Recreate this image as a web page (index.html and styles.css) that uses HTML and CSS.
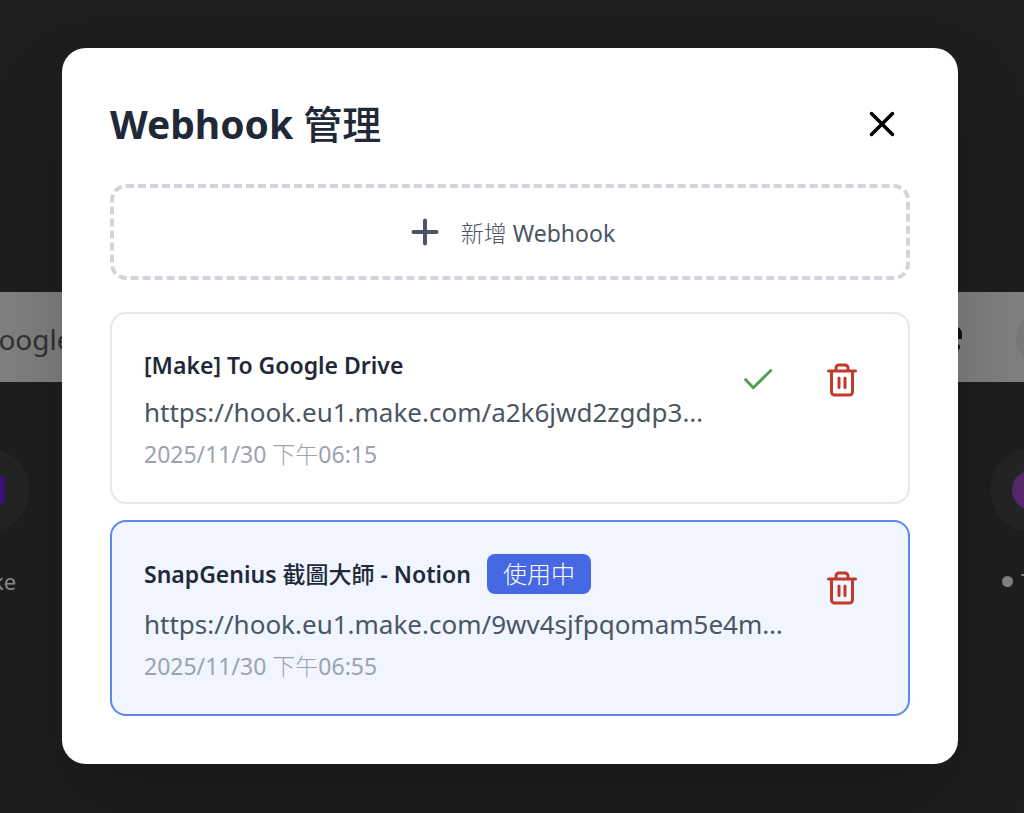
FILE: index.html
```
<!DOCTYPE html>
<html lang="zh-TW">
<head>
    <meta charset="UTF-8">
    <meta name="viewport" content="width=device-width, initial-scale=1.0">
    <title>Webhook 管理</title>
    <link rel="stylesheet" href="styles.css">
</head>
<body>
    <div class="page">
        <div class="search-bar">
            <span class="search-text">Google</span>
            <div class="search-tools">
                <svg width="32" height="32" viewBox="0 0 32 32" fill="none" stroke="#111" stroke-width="4">
                    <path d="M3 14v-3a6 6 0 0 1 6-6h15a6 6 0 0 1 6 6v5M3 20v3a6 6 0 0 0 6 6h7"/>
                    <circle cx="16" cy="17" r="4"/>
                    <circle cx="27" cy="24" r="3" fill="#111" stroke="none"/>
                </svg>
                <span class="search-action"></span>
            </div>
        </div>
        <div class="shortcuts">
            <div class="shortcut">
                <span class="shortcut-icon"><span class="make-logo"></span></span>
                <span>Make</span>
            </div>
            <div class="shortcut">
                <span class="shortcut-icon"><span class="round-logo"></span></span>
                <span class="shortcut-label"><i class="dot"></i>T</span>
            </div>
        </div>
    </div>

    <div class="overlay">
        <div class="modal" role="dialog" aria-labelledby="modalTitle">
            <div class="modal-header">
                <h1 id="modalTitle">Webhook <span class="cjk-medium">管理</span></h1>
                <button class="close-btn" type="button" aria-label="關閉">
                    <svg width="32" height="32" viewBox="0 0 32 32" fill="none" stroke="#000" stroke-width="3.500" stroke-linecap="round">
                        <path d="M5.500 5.500l21 21M26.500 5.500l-21 21"/>
                    </svg>
                </button>
            </div>

            <button class="add-btn" type="button">
                <svg width="40" height="40" viewBox="0 0 40 40" fill="none" stroke="currentColor" stroke-width="4" stroke-linecap="round">
                    <path d="M20 8.500v23M8.500 20h23"/>
                </svg>
                <span><span class="cjk">新增</span> Webhook</span>
            </button>

            <div class="webhook-list">
                <div class="webhook">
                    <div class="webhook-info">
                        <div class="webhook-name">[Make] To Google Drive</div>
                        <div class="webhook-url">https://hook.eu1.make.com/a2k6jwd2zgdp3…</div>
                        <div class="webhook-date">2025/11/30 <span class="cjk">下午</span>06:15</div>
                    </div>
                    <div class="webhook-actions">
                        <button class="icon-btn use" type="button" aria-label="使用">
                            <svg width="36" height="36" viewBox="0 0 36 36">
                                <path d="M5.700 17.700l7.600 8L30.700 8.500"/>
                            </svg>
                        </button>
                        <button class="icon-btn delete" type="button" aria-label="刪除">
                            <svg width="36" height="36" viewBox="0 0 36 36">
                                <path d="M4.500 9h27M7.500 9v21a3 3 0 0 0 3 3h15a3 3 0 0 0 3-3V9M12 9V6a3 3 0 0 1 3-3h6a3 3 0 0 1 3 3v3M15 16v9.500M21 16v9.500"/>
                            </svg>
                        </button>
                    </div>
                </div>

                <div class="webhook active">
                    <div class="webhook-info">
                        <div class="webhook-name"><span>SnapGenius <span class="cjk-medium">截圖大師</span> - Notion</span> <span class="badge">使用中</span></div>
                        <div class="webhook-url">https://hook.eu1.make.com/9wv4sjfpqomam5e4m…</div>
                        <div class="webhook-date">2025/11/30 <span class="cjk">下午</span>06:55</div>
                    </div>
                    <div class="webhook-actions">
                        <button class="icon-btn delete" type="button" aria-label="刪除">
                            <svg width="36" height="36" viewBox="0 0 36 36">
                                <path d="M4.500 9h27M7.500 9v21a3 3 0 0 0 3 3h15a3 3 0 0 0 3-3V9M12 9V6a3 3 0 0 1 3-3h6a3 3 0 0 1 3 3v3M15 16v9.500M21 16v9.500"/>
                            </svg>
                        </button>
                    </div>
                </div>
            </div>
        </div>
    </div>
</body>
</html>
```
FILE: styles.css
```
* {
    box-sizing: border-box;
}
body {
    margin: 0;
    min-height: 100vh;
    overflow: hidden;
    background-color: #1e1e1e;
    font-family: 'Segoe UI', 'Noto Sans', 'Noto Sans CJK TC', sans-serif;
    color: #1f2937;
}
h1 {
    margin: 0;
    font-size: 39px;
    line-height: 56px;
    font-weight: bold;
}
button {
    border: none;
    background: none;
    padding: 0;
    font-family: inherit;
    cursor: pointer;
}
svg {
    display: block;
    flex-shrink: 0;
}
.cjk {
    font-weight: 300;
}
.cjk-medium {
    font-weight: 500;
}

/* 背景頁面 */
.page {
    overflow: hidden;
    padding-top: 292px;
}
.search-bar {
    display: flex;
    align-items: center;
    justify-content: space-between;
    height: 90px;
    margin: 0 -64px 0 -22px;
    padding-top: 4px;
    background-color: #808080;
    color: #303134;
    font-size: 28px;
}
.search-tools {
    display: flex;
    align-items: center;
    gap: 54px;
}
.search-action {
    width: 72px;
    height: 56px;
    border-radius: 28px;
    background-color: #76787b;
}
.shortcuts {
    display: flex;
    justify-content: space-between;
    margin: 66px -50px 0 -54px;
    color: #8a8a8a;
    font-size: 22px;
}
.shortcut {
    display: flex;
    flex-direction: column;
    align-items: center;
    gap: 34px;
    width: 84px;
}
.shortcut-icon {
    display: flex;
    align-items: center;
    justify-content: center;
    width: 84px;
    height: 84px;
    border-radius: 50%;
    background-color: #232525;
}
.make-logo {
    width: 34px;
    height: 28px;
    border-radius: 2px;
    background-color: #3b1275;
}
.round-logo {
    width: 40px;
    height: 40px;
    border-radius: 50%;
    background-color: #56286b;
}
.shortcut-label {
    display: flex;
    align-items: center;
    align-self: flex-start;
    gap: 8px;
    padding-left: 12px;
}
.dot {
    width: 11px;
    height: 11px;
    border-radius: 50%;
    background-color: #808284;
}

/* 對話框 */
.overlay {
    position: absolute;
    top: 0;
    left: 0;
    right: 0;
    padding: 48px 66px 48px 62px;
}
.modal {
    padding: 48px;
    border-radius: 24px;
    background-color: #fff;
    box-shadow: 0 40px 80px rgba(0, 0, 0, 0.2);
}
.modal-header {
    display: flex;
    justify-content: space-between;
    align-items: center;
    margin-bottom: 32px;
}
.close-btn {
    display: flex;
    align-items: center;
    justify-content: center;
    width: 56px;
    height: 56px;
}
.add-btn {
    display: flex;
    align-items: center;
    justify-content: center;
    gap: 16px;
    width: 100%;
    height: 96px;
    margin-bottom: 32px;
    border: 4px dashed #d1d5db;
    border-radius: 16px;
    color: #4b5563;
    font-size: 23px;
}
.webhook-list {
    display: flex;
    flex-direction: column;
    gap: 16px;
}
.webhook {
    display: flex;
    gap: 16px;
    padding: 32px;
    border: 2px solid #e5e7eb;
    border-radius: 16px;
}
.webhook.active {
    border-color: #5b87ee;
    background-color: #f0f5ff;
}
.webhook-info {
    flex: 1;
    min-width: 0;
    white-space: nowrap;
}
.webhook-name {
    display: flex;
    align-items: center;
    gap: 16px;
    margin-bottom: 6px;
    font-size: 23px;
    font-weight: 600;
    line-height: 38px;
}
.badge {
    padding: 0 16px;
    border-radius: 8px;
    background-color: #4668e3;
    color: #fff;
    font-size: 24px;
    font-weight: 300;
    line-height: 40px;
}
.webhook-url {
    margin-bottom: 4px;
    color: #4b5563;
    font-size: 26px;
    line-height: 44px;
}
.active .webhook-url {
    margin-top: 8px;
}
.webhook-date {
    color: #9ca3af;
    font-size: 23px;
    line-height: 32px;
}
.active .webhook-name {
    margin-bottom: 0;
}
.webhook-actions {
    display: flex;
    align-items: flex-start;
    gap: 16px;
}
.icon-btn {
    padding: 16px;
}
.icon-btn svg {
    fill: none;
    stroke: currentColor;
    stroke-width: 3;
    stroke-linecap: round;
    stroke-linejoin: round;
}
.use {
    color: #559f50;
}
.delete {
    color: #c0392b;
}
```
